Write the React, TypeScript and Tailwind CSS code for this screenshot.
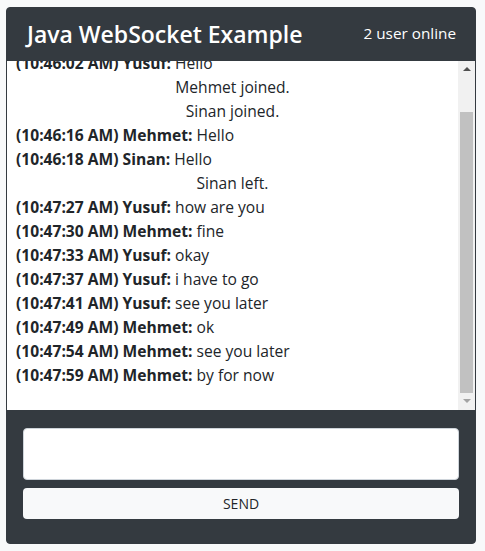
import React, { useEffect, useRef } from 'react';

type Msg = { time?: string; user?: string; text: string };

const messages: Msg[] = [
  { time: '10:46:02 AM', user: 'Yusuf', text: 'Hello' },
  { text: 'Mehmet joined.' },
  { text: 'Sinan joined.' },
  { time: '10:46:16 AM', user: 'Mehmet', text: 'Hello' },
  { time: '10:46:18 AM', user: 'Sinan', text: 'Hello' },
  { text: 'Sinan left.' },
  { time: '10:47:27 AM', user: 'Yusuf', text: 'how are you' },
  { time: '10:47:30 AM', user: 'Mehmet', text: 'fine' },
  { time: '10:47:33 AM', user: 'Yusuf', text: 'okay' },
  { time: '10:47:37 AM', user: 'Yusuf', text: 'i have to go' },
  { time: '10:47:41 AM', user: 'Yusuf', text: 'see you later' },
  { time: '10:47:49 AM', user: 'Mehmet', text: 'ok' },
  { time: '10:47:54 AM', user: 'Mehmet', text: 'see you later' },
  { time: '10:47:59 AM', user: 'Mehmet', text: 'by for now' }
];

// classic scrollbar, drawn by hand since the headless browser hides its own
function Scrollbar() {
  return (
    <div className="w-[17px] shrink-0 bg-[#f1f1f1] flex flex-col items-center">
      <div className="h-[17px] flex items-center justify-center">
        <svg width="8" height="5" viewBox="0 0 8 5">
          <polygon points="4,0 8,4 0,4" fill="#505050" />
        </svg>
      </div>
      <div className="flex-1 w-full px-[2px] pt-[34px]">
        <div className="h-[281px] bg-[#c1c1c1]" />
      </div>
      <div className="h-[17px] flex items-center justify-center">
        <svg width="8" height="5" viewBox="0 0 8 5">
          <polygon points="0,0 8,0 4,4" fill="#a3a3a3" />
        </svg>
      </div>
    </div>
  );
}

export default function App() {
  const logRef = useRef<HTMLDivElement>(null);

  useEffect(() => {
    if (logRef.current) logRef.current.scrollTop = 46;
  }, []);

  return (
    <div
      className="min-h-[551px] bg-[#f8f9fa] pt-[7px] px-[6px] text-[#212529]"
      style={{ fontFamily: '"Open Sans", "Noto Sans", sans-serif' }}
    >
      <div className="w-[470px] rounded-[4px] bg-[#343a40] border border-[#343a40] overflow-hidden">
        <div className="h-[53px] flex items-center justify-between pl-[20px] pr-[19px]">
          <h4 className="text-white text-[23px] font-semibold leading-[28px] -mt-[2px]">Java WebSocket Example</h4>
          <span className="text-white text-[15.3px] leading-[22px] -mt-[4px]">2 user online</span>
        </div>

        <div className="h-[349px] flex bg-white">
          <div ref={logRef} className="flex-1 overflow-hidden text-[15.6px] leading-[24px]">
            <div className="pt-[36px] pb-6 pl-[9px]">
              {messages.map((m, idx) =>
                m.user ? (
                  <div key={idx} className="whitespace-nowrap">
                    <b className="font-bold">({m.time}) {m.user}:</b> {m.text}
                  </div>
                ) : (
                  <div key={idx} className="text-center -ml-[9px]">{m.text}</div>
                )
              )}
            </div>
          </div>
          <Scrollbar />
        </div>

        <div className="px-4 pt-[18px] pb-[24px] flex flex-col gap-2">
          <textarea className="h-[52px] w-full bg-white rounded-[4px] border border-[#ced4da] resize-none outline-none px-3 py-1.5 text-[15px]" />
          <button className="h-[31px] w-full bg-[#f8f9fa] rounded-[4px] text-[14px] text-[#212529]">SEND</button>
        </div>
      </div>
    </div>
  );
}
